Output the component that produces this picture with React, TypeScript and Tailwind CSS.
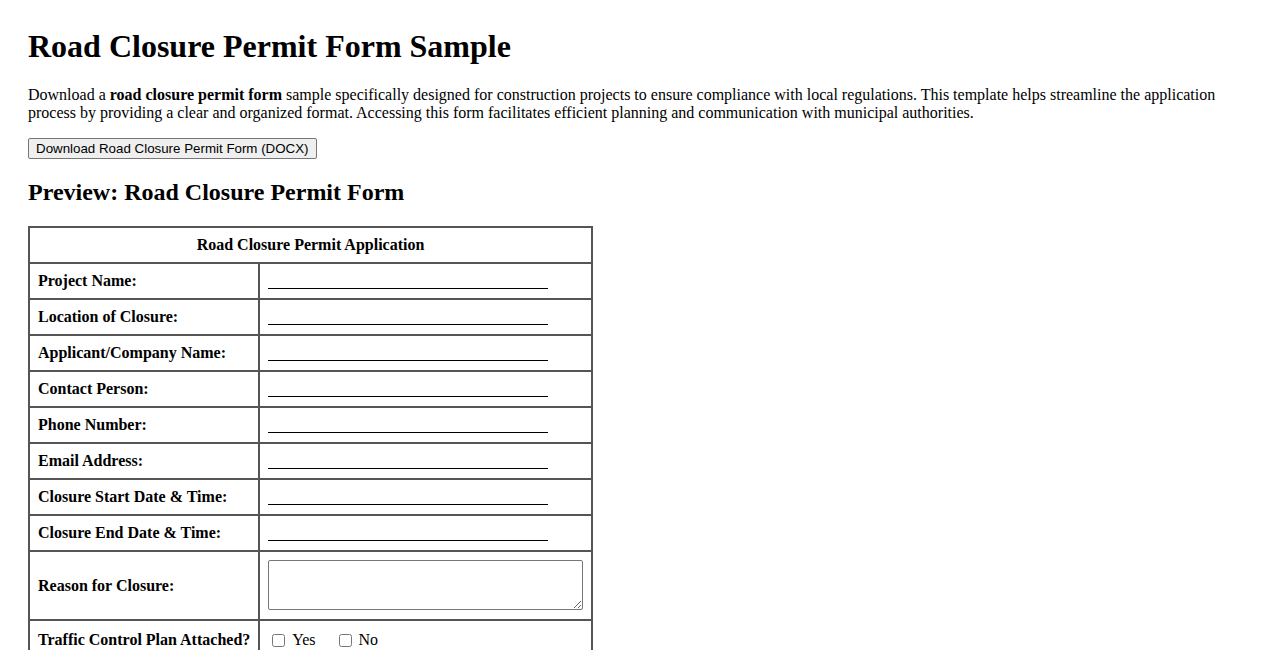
import React from "react";

const fields = [
  "Project Name:",
  "Location of Closure:",
  "Applicant/Company Name:",
  "Contact Person:",
  "Phone Number:",
  "Email Address:",
  "Closure Start Date & Time:",
  "Closure End Date & Time:",
];

function Blank() {
  return <div className="mb-px h-[16px] w-[280px] border-b border-black" />;
}

export default function App() {
  return (
    <div className="bg-white px-[28px] pt-[28px] pb-10 text-black [font-family:'Liberation_Serif','Times_New_Roman',serif]">
      <h1 className="mb-[21px] text-[32px] leading-[37px] font-bold">Road Closure Permit Form Sample</h1>
      <p className="mb-[15px] text-base leading-[18.4px]">
        Download a <strong>road closure permit form</strong> sample specifically designed for construction projects to ensure
        compliance with local regulations. This template helps streamline the application process by providing a clear and
        organized format. Accessing this form facilitates efficient planning and communication with municipal authorities.
      </p>
      <button className="block rounded-[2px] border border-[#767676] bg-[#efefef] px-[7px] py-[1px] text-[13.33px] leading-[17px] [font-family:'Liberation_Sans',Arial,sans-serif] hover:bg-[#e5e5e5]">
        Download Road Closure Permit Form (DOCX)
      </button>
      <h2 className="mt-[20px] mb-[20px] text-2xl leading-[27.6px] font-bold">Preview: Road Closure Permit Form</h2>

      <table className="w-[565px] border-separate border-spacing-0 border border-[#555] text-base">
        <tbody>
          <tr>
            <th colSpan={2} className="border border-[#555] p-2 text-center leading-[18px] font-bold">
              Road Closure Permit Application
            </th>
          </tr>
          {fields.map((f) => (
            <tr key={f}>
              <td className="w-[230px] border border-[#555] p-2 leading-[18px] font-bold whitespace-nowrap">{f}</td>
              <td className="border border-[#555] p-2">
                <Blank />
              </td>
            </tr>
          ))}
          <tr>
            <td className="border border-[#555] p-2 leading-[18px] font-bold">Reason for Closure:</td>
            <td className="border border-[#555] px-2 pt-2 pb-[9px]">
              <textarea className="block h-[50px] w-full resize-y rounded-[2px] border border-[#767676] bg-white" />
            </td>
          </tr>
          <tr>
            <td className="border border-[#555] px-2 pt-[10px] pb-2 leading-[18px] font-bold whitespace-nowrap">
              Traffic Control Plan Attached?
            </td>
            <td className="border border-[#555] px-2 pt-[10px] pb-2">
              <div className="flex items-center text-base leading-[18px]">
                <label className="flex items-center">
                  <input type="checkbox" className="mx-[4px] h-[13px] w-[13px]" />
                  <span className="ml-[3px]">Yes</span>
                </label>
                <label className="ml-[19px] flex items-center">
                  <input type="checkbox" className="mx-[4px] h-[13px] w-[13px]" />
                  <span className="ml-[3px]">No</span>
                </label>
              </div>
            </td>
          </tr>
          <tr>
            <td className="border border-[#555] p-2 leading-[18px] font-bold">Permit Fee Paid?</td>
            <td className="border border-[#555] p-2">
              <Blank />
            </td>
          </tr>
        </tbody>
      </table>
    </div>
  );
}
